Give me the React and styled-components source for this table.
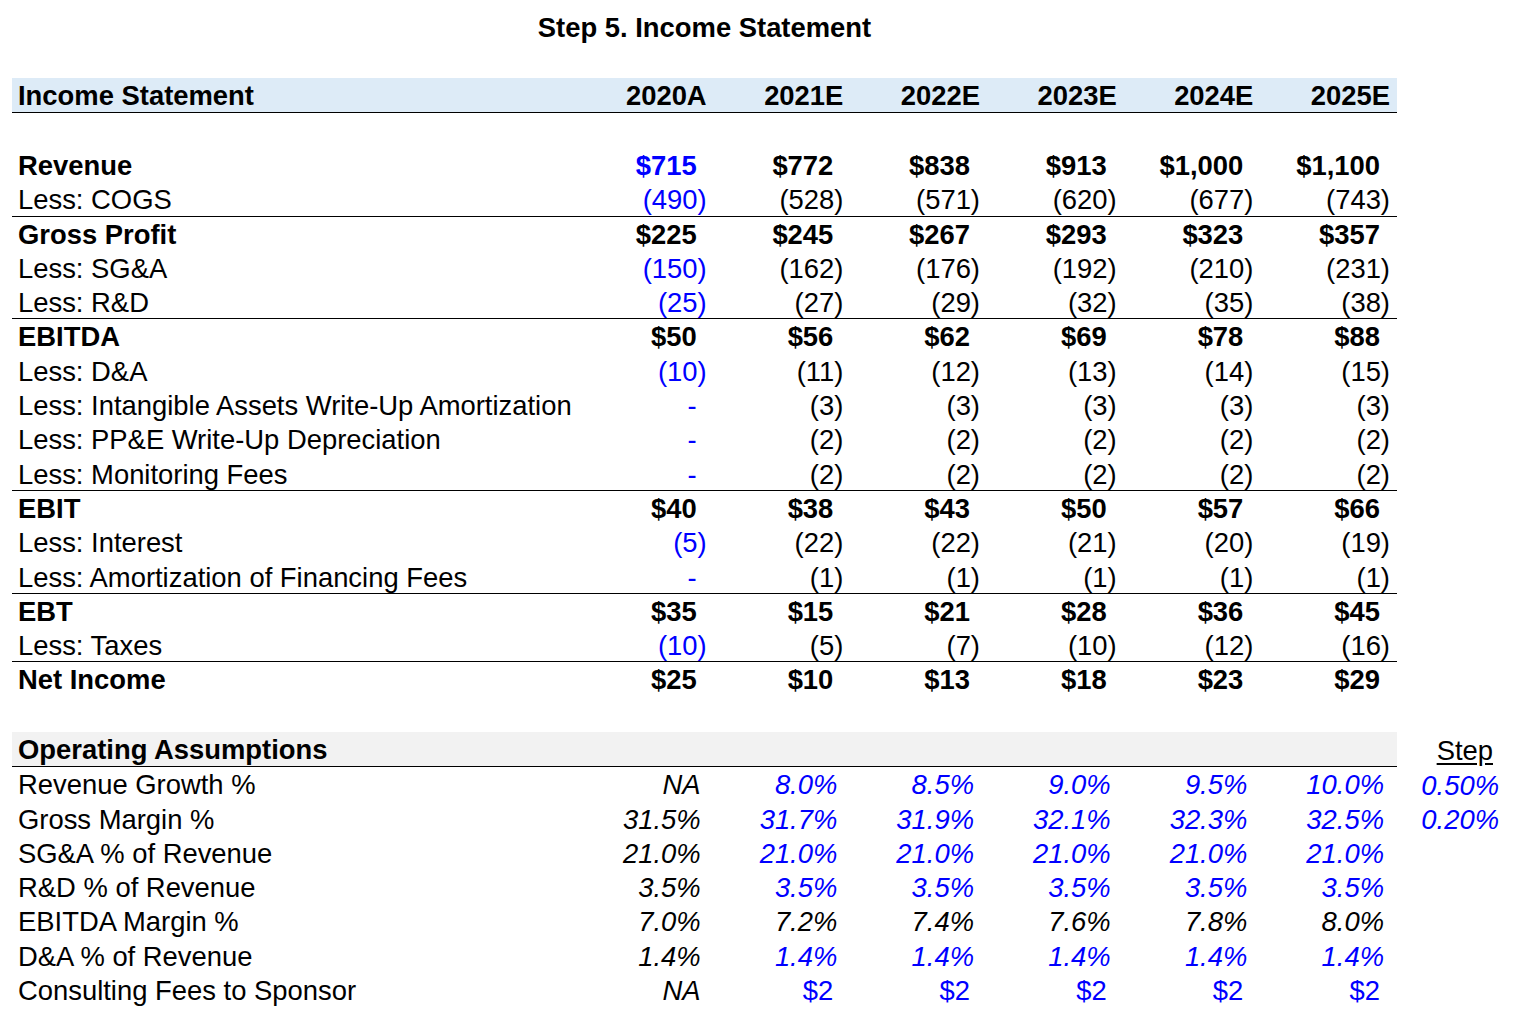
import React from 'react';
import styled, { createGlobalStyle } from 'styled-components';

const GlobalStyle = createGlobalStyle`
  body {
    margin: 0;
    background: #fff;
    color: #000;
    font-family: "Liberation Sans", Arial, sans-serif;
  }
`;

const BLUE = '#0000ff';

const Sheet = styled.div`
  padding-left: 12px;
  font-size: 27.4px;
  line-height: 1.15;
`;

const Title = styled.h1`
  width: 1385px;
  height: 78px;
  margin: 0;
  padding-top: 11px;
  box-sizing: border-box;
  font-size: 27.4px;
  font-weight: 700;
  line-height: 34px;
  text-align: center;
`;

const Row = styled.div`
  display: flex;
  height: ${props => (props.$tall ? '35px' : '34.3px')};
`;

const Spacer = styled.div`
  height: ${props => props.$h}px;
`;

const Main = styled.div`
  display: grid;
  grid-template-columns: 565px repeat(6, 1fr);
  align-items: center;
  width: 1385px;
  box-sizing: border-box;
  padding-top: 2px;
  background: ${props => props.$band || 'transparent'};
  border-bottom: ${props => (props.$line ? '1px solid #000' : '1px solid transparent')};
`;

const Label = styled.div`
  padding-left: 6px;
  white-space: nowrap;
  font-weight: ${props => (props.$bold ? 700 : 400)};
`;

const Head = styled.div`
  padding-right: 7px;
  text-align: right;
  font-weight: 700;
`;

const padFor = { neg: 7, pos: 17, pct: 13 };

const Value = styled.div`
  padding-right: ${props => padFor[props.$kind]}px;
  text-align: right;
  white-space: nowrap;
  color: ${props => (props.$blue ? BLUE : '#000')};
  font-weight: ${props => (props.$bold ? 700 : 400)};
  font-style: ${props => (props.$kind === 'pct' ? 'italic' : 'normal')};
`;

const Side = styled.div`
  display: flex;
  align-items: center;
  justify-content: flex-end;
  width: 108px;
  padding: 2px 6px 0 0;
  box-sizing: border-box;
  color: ${props => (props.$blue ? BLUE : '#000')};
  font-style: ${props => (props.$italic ? 'italic' : 'normal')};
`;

const StepHead = styled.span`
  margin-right: 6px;
  text-decoration: underline;
  text-underline-offset: 3px;
`;

const years = ['2020A', '2021E', '2022E', '2023E', '2024E', '2025E'];

// first value is the 2020A input (blue), the rest are formulas
const income = [
  { label: 'Revenue', bold: true, blueFirst: true, vals: ['$715', '$772', '$838', '$913', '$1,000', '$1,100'] },
  { label: 'Less: COGS', blueFirst: true, line: true, vals: ['(490)', '(528)', '(571)', '(620)', '(677)', '(743)'] },
  { label: 'Gross Profit', bold: true, vals: ['$225', '$245', '$267', '$293', '$323', '$357'] },
  { label: 'Less: SG&A', blueFirst: true, vals: ['(150)', '(162)', '(176)', '(192)', '(210)', '(231)'] },
  { label: 'Less: R&D', blueFirst: true, line: true, vals: ['(25)', '(27)', '(29)', '(32)', '(35)', '(38)'] },
  { label: 'EBITDA', bold: true, vals: ['$50', '$56', '$62', '$69', '$78', '$88'] },
  { label: 'Less: D&A', blueFirst: true, vals: ['(10)', '(11)', '(12)', '(13)', '(14)', '(15)'] },
  { label: 'Less: Intangible Assets Write-Up Amortization', blueFirst: true, vals: ['-', '(3)', '(3)', '(3)', '(3)', '(3)'] },
  { label: 'Less: PP&E Write-Up Depreciation', blueFirst: true, vals: ['-', '(2)', '(2)', '(2)', '(2)', '(2)'] },
  { label: 'Less: Monitoring Fees', blueFirst: true, line: true, vals: ['-', '(2)', '(2)', '(2)', '(2)', '(2)'] },
  { label: 'EBIT', bold: true, vals: ['$40', '$38', '$43', '$50', '$57', '$66'] },
  { label: 'Less: Interest', blueFirst: true, vals: ['(5)', '(22)', '(22)', '(21)', '(20)', '(19)'] },
  { label: 'Less: Amortization of Financing Fees', blueFirst: true, line: true, vals: ['-', '(1)', '(1)', '(1)', '(1)', '(1)'] },
  { label: 'EBT', bold: true, vals: ['$35', '$15', '$21', '$28', '$36', '$45'] },
  { label: 'Less: Taxes', blueFirst: true, line: true, vals: ['(10)', '(5)', '(7)', '(10)', '(12)', '(16)'] },
  { label: 'Net Income', bold: true, vals: ['$25', '$10', '$13', '$18', '$23', '$29'] },
];

const assumptions = [
  { label: 'Revenue Growth %', blueRest: true, vals: ['NA', '8.0%', '8.5%', '9.0%', '9.5%', '10.0%'], step: '0.50%' },
  { label: 'Gross Margin %', blueRest: true, vals: ['31.5%', '31.7%', '31.9%', '32.1%', '32.3%', '32.5%'], step: '0.20%' },
  { label: 'SG&A % of Revenue', blueRest: true, vals: ['21.0%', '21.0%', '21.0%', '21.0%', '21.0%', '21.0%'] },
  { label: 'R&D % of Revenue', blueRest: true, vals: ['3.5%', '3.5%', '3.5%', '3.5%', '3.5%', '3.5%'] },
  { label: 'EBITDA Margin %', vals: ['7.0%', '7.2%', '7.4%', '7.6%', '7.8%', '8.0%'] },
  { label: 'D&A % of Revenue', blueRest: true, vals: ['1.4%', '1.4%', '1.4%', '1.4%', '1.4%', '1.4%'] },
  { label: 'Consulting Fees to Sponsor', blueRest: true, dollars: true, vals: ['NA', '$2', '$2', '$2', '$2', '$2'] },
];

const kindOf = v => (v.startsWith('(') ? 'neg' : 'pos');

export default function App() {
  return (
    <Sheet>
      <GlobalStyle />
      <Title>Step 5. Income Statement</Title>

      <Row $tall>
        <Main $band="#ddebf7" $line>
          <Label $bold>Income Statement</Label>
          {years.map(y => (
            <Head key={y}>{y}</Head>
          ))}
        </Main>
      </Row>
      <Spacer $h={35} />

      {income.map(r => (
        <Row key={r.label}>
          <Main $line={r.line}>
            <Label $bold={r.bold}>{r.label}</Label>
            {r.vals.map((v, i) => (
              <Value key={i} $kind={kindOf(v)} $bold={r.bold} $blue={i === 0 && r.blueFirst}>
                {v}
              </Value>
            ))}
          </Main>
        </Row>
      ))}

      <Spacer $h={35.5} />

      <Row $tall>
        <Main $band="#f2f2f2" $line>
          <Label $bold>Operating Assumptions</Label>
        </Main>
        <Side>
          <StepHead>Step</StepHead>
        </Side>
      </Row>

      {assumptions.map(r => (
        <Row key={r.label}>
          <Main>
            <Label>{r.label}</Label>
            {r.vals.map((v, i) => {
              const money = r.dollars && i > 0;
              return (
                <Value key={i} $kind={money ? 'pos' : 'pct'} $blue={i > 0 && r.blueRest}>
                  {v}
                </Value>
              );
            })}
          </Main>
          {r.step && (
            <Side $blue $italic>
              {r.step}
            </Side>
          )}
        </Row>
      ))}
    </Sheet>
  );
}
